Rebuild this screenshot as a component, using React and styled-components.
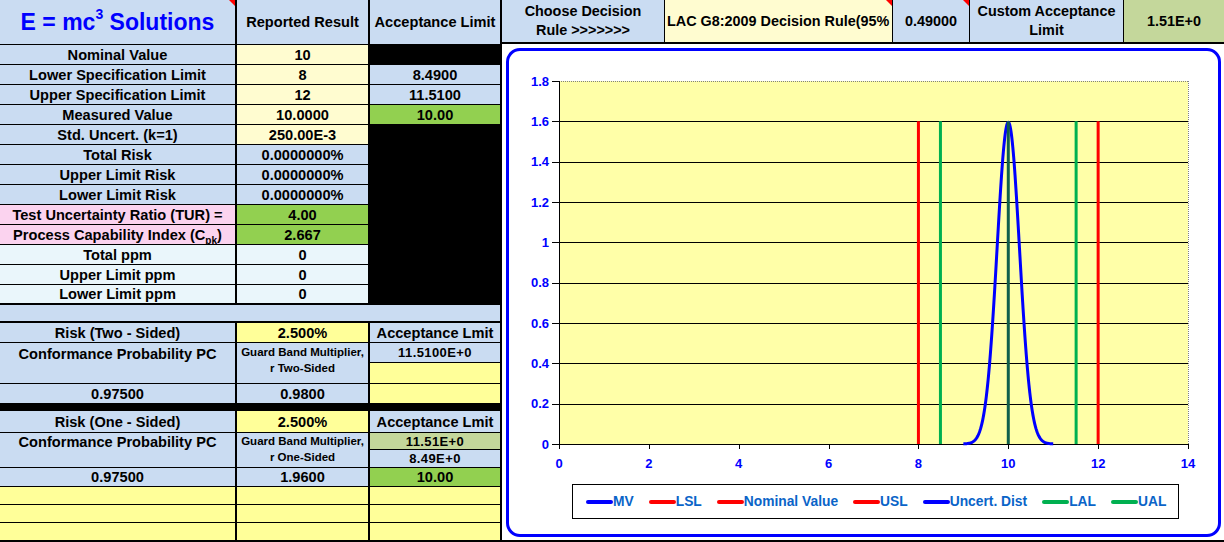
import React from 'react';
import styled, { createGlobalStyle } from 'styled-components';

const GlobalStyle = createGlobalStyle`
  html, body { margin: 0; padding: 0; background: #fff; }
  body { font-family: "Liberation Sans", Arial, sans-serif; overflow: hidden; }
`;

const fills = {
  blue: '#cadcf2',
  cream: '#fffcd0',
  yellow: '#ffff99',
  green: '#92d050',
  sage: '#c4d79b',
  pink: '#fbd3ef',
  mist: '#eaf6fb',
  black: '#000000',
};

const Page = styled.div`
  display: flex;
  width: 1224px;
  height: 542px;
  overflow: hidden;
`;

const Sheet = styled.div`
  flex: none;
  display: grid;
  grid-template-columns: 237px 133px 132px;
  grid-template-rows: 45px repeat(13, 20px) 18px 20px 20px 21px 20px 7px 22px 17px 18px 19px 18px 18px 19px;
`;

const Cell = styled.div`
  position: relative;
  box-sizing: border-box;
  grid-column: ${p => (p.$span ? `span ${p.$span}` : 'auto')};
  grid-row: ${p => (p.$rows ? `span ${p.$rows}` : 'auto')};
  background: ${p => fills[p.$fill || 'blue']};
  border-right: 2px solid #000;
  border-bottom: ${p => (p.$bb ?? 1)}px solid #000;
  display: flex;
  flex-direction: column;
  align-items: center;
  justify-content: ${p => (p.$top ? 'flex-start' : 'center')};
  padding-top: ${p => p.$pt || 0}px;
  text-align: center;
  white-space: nowrap;
  overflow: hidden;
  font-weight: bold;
  font-size: ${p => p.$size || 14.6}px;
  letter-spacing: ${p => p.$ls || 0}px;
  line-height: ${p => p.$lh || 'normal'};
  color: #000;

  ${p => p.$note && `
    &::after {
      content: '';
      position: absolute;
      top: 0;
      right: 0;
      border-top: 6px solid #ff0000;
      border-left: 6px solid transparent;
    }
  `}
`;

const Title = styled.span`
  color: #0000ff;
  font-size: 23px;
`;

const Sup = styled.sup`
  font-size: 14px;
  line-height: 0;
  position: relative;
  top: -2px;
`;

const Sub = styled.sub`
  font-size: 10px;
  line-height: 0;
`;

const Side = styled.div`
  flex: none;
  width: 722px;
  display: flex;
  flex-direction: column;
`;

const TopBar = styled.div`
  box-sizing: border-box;
  height: 44px;
  display: grid;
  grid-template-columns: 163px 228px 77px 154px 100px;
  border-bottom: 2px solid #000;
`;

const TopCell = styled.div`
  position: relative;
  box-sizing: border-box;
  background: ${p => fills[p.$fill || 'blue']};
  border-right: ${p => (p.$last ? 0 : 1)}px solid #000;
  display: flex;
  flex-direction: column;
  align-items: ${p => (p.$left ? 'flex-start' : 'center')};
  justify-content: center;
  padding-left: ${p => (p.$left ? 2 : 0)}px;
  font-weight: bold;
  font-size: 14.4px;
  line-height: 19px;
  text-align: center;
  white-space: nowrap;
  overflow: hidden;

  ${p => p.$note && `
    &::after {
      content: '';
      position: absolute;
      top: 0;
      right: 0;
      border-top: 6px solid #ff0000;
      border-left: 6px solid transparent;
    }
  `}
`;

const ChartArea = styled.div`
  flex: 1;
  box-sizing: border-box;
  display: flex;
  padding: 4px 3px 3px 4px;
  border-bottom: 2px solid #000;
  background: #fff;
`;

const Panel = styled.div`
  flex: 1;
  display: flex;
  flex-direction: column;
  border: 3px solid #0000ff;
  border-radius: 14px;
  background: #fff;
`;

const PlotSvg = styled.svg`
  display: block;
  width: 709px;
  height: 433px;
  font-family: "Liberation Sans", Arial, sans-serif;
`;

const LegendBox = styled.div`
  box-sizing: border-box;
  margin-left: 63px;
  width: 607px;
  height: 35px;
  border: 1px solid #000;
  display: flex;
  align-items: center;
  gap: 15px;
  padding-left: 13px;
`;

const LegendItem = styled.div`
  display: flex;
  align-items: center;
  font-weight: bold;
  font-size: 13.8px;
  color: #0a64c8;
`;

const Swatch = styled.span`
  width: 27px;
  height: 4px;
  border-radius: 2px;
  background: ${p => p.$color};
`;

// plot geometry (svg coords, origin at panel inner top-left)
const X0 = 50, X1 = 679, Y0 = 30, Y1 = 393;
const sx = x => X0 + (x * (X1 - X0)) / 14;
const sy = y => Y1 - (y * (Y1 - Y0)) / 1.8;

const curve = (() => {
  const pts = [];
  for (let i = 0; i <= 200; i++) {
    const x = 9 + i * 0.01;
    const y = 1.5958 * Math.exp(-((x - 10) ** 2) / (2 * 0.0625));
    pts.push(`${sx(x).toFixed(2)},${sy(y).toFixed(2)}`);
  }
  return pts.join(' ');
})();

const yTicks = [0, 0.2, 0.4, 0.6, 0.8, 1, 1.2, 1.4, 1.6, 1.8];
const xTicks = [0, 2, 4, 6, 8, 10, 12, 14];

const limits = [
  { x: 8, color: '#ff0000' },
  { x: 8.49, color: '#00b050' },
  { x: 11.51, color: '#00b050' },
  { x: 12, color: '#ff0000' },
];

const legend = [
  ['MV', '#0000ff'],
  ['LSL', '#ff0000'],
  ['Nominal Value', '#ff0000'],
  ['USL', '#ff0000'],
  ['Uncert. Dist', '#0000ff'],
  ['LAL', '#00b050'],
  ['UAL', '#00b050'],
];

const Chart = () => (
  <Panel>
    <PlotSvg viewBox="0 0 709 433">
      <rect x={X0} y={Y0} width={X1 - X0} height={Y1 - Y0} fill="#ffffa8" />
      <line x1={X0} y1={Y0 + 0.5} x2={X1} y2={Y0 + 0.5} stroke="#808080" strokeDasharray="1 1" />
      <line x1={X1 + 0.5} y1={Y0} x2={X1 + 0.5} y2={Y1} stroke="#808080" strokeDasharray="1 1" />
      {yTicks.slice(1, -1).map(v => (
        <line key={v} x1={X0} x2={X1} y1={Math.round(sy(v)) + 0.5} y2={Math.round(sy(v)) + 0.5} stroke="#000" />
      ))}
      {yTicks.map(v => (
        <g key={v}>
          <line x1={X0 - 7} x2={X0} y1={Math.round(sy(v)) + 0.5} y2={Math.round(sy(v)) + 0.5} stroke="#000" />
          <text x={X0 - 10} y={sy(v) + 4.5} textAnchor="end" fontSize="13" fontWeight="bold" fill="#0000ff">
            {v}
          </text>
        </g>
      ))}
      {xTicks.map(v => (
        <g key={v}>
          <line x1={Math.round(sx(v)) + 0.5} x2={Math.round(sx(v)) + 0.5} y1={Y1} y2={Y1 + 5} stroke="#000" />
          <text x={sx(v)} y={Y1 + 24} textAnchor="middle" fontSize="13" fontWeight="bold" fill="#0000ff">
            {v}
          </text>
        </g>
      ))}
      <line x1={X0 + 0.5} y1={Y0} x2={X0 + 0.5} y2={Y1} stroke="#000" />
      <line x1={X0} y1={Y1 + 0.5} x2={X1} y2={Y1 + 0.5} stroke="#000" />
      {limits.map(l => (
        <line key={l.x} x1={sx(l.x)} x2={sx(l.x)} y1={sy(1.6)} y2={Y1} stroke={l.color} strokeWidth="3" />
      ))}
      <polyline points={curve} fill="none" stroke="#0000ff" strokeWidth="3" strokeLinejoin="round" />
      <line x1={sx(10)} x2={sx(10)} y1={sy(1.6)} y2={Y1} stroke="#10604c" strokeWidth="3" />
    </PlotSvg>
    <LegendBox>
      {legend.map(([label, color]) => (
        <LegendItem key={label}>
          <Swatch $color={color} />
          {label}
        </LegendItem>
      ))}
    </LegendBox>
  </Panel>
);

const App = () => (
  <Page>
    <GlobalStyle />
    <Sheet>
      <Cell $note>
        <Title>
          E = mc<Sup>3</Sup> Solutions
        </Title>
      </Cell>
      <Cell>Reported Result</Cell>
      <Cell>Acceptance Limit</Cell>

      <Cell>Nominal Value</Cell>
      <Cell $fill="cream">10</Cell>
      <Cell $fill="black" />

      <Cell>Lower Specification Limit</Cell>
      <Cell $fill="cream">8</Cell>
      <Cell>8.4900</Cell>

      <Cell>Upper Specification Limit</Cell>
      <Cell $fill="cream">12</Cell>
      <Cell>11.5100</Cell>

      <Cell>Measured Value</Cell>
      <Cell $fill="cream">10.0000</Cell>
      <Cell $fill="green">10.00</Cell>

      <Cell>Std. Uncert. (k=1)</Cell>
      <Cell $fill="cream">250.00E-3</Cell>
      <Cell $fill="black" $rows={9} $bb={2} />

      <Cell>Total Risk</Cell>
      <Cell>0.0000000%</Cell>
      <Cell>Upper Limit Risk</Cell>
      <Cell>0.0000000%</Cell>
      <Cell>Lower Limit Risk</Cell>
      <Cell>0.0000000%</Cell>

      <Cell $fill="pink">Test Uncertainty Ratio (TUR) =</Cell>
      <Cell $fill="green">4.00</Cell>
      <Cell $fill="pink">
        <span>
          Process Capability Index (C<Sub>pk</Sub>)
        </span>
      </Cell>
      <Cell $fill="green">2.667</Cell>

      <Cell $fill="mist">Total ppm</Cell>
      <Cell $fill="mist">0</Cell>
      <Cell $fill="mist">Upper Limit ppm</Cell>
      <Cell $fill="mist">0</Cell>
      <Cell $fill="mist" $bb={2}>Lower Limit ppm</Cell>
      <Cell $fill="mist" $bb={2}>0</Cell>

      <Cell $span={3} $bb={2} />

      <Cell>Risk (Two - Sided)</Cell>
      <Cell $fill="yellow">2.500%</Cell>
      <Cell>Acceptance Lmit</Cell>

      <Cell $rows={2} $top $pt={3}>Conformance Probability PC</Cell>
      <Cell $rows={2} $top $pt={1} $size={11.5} $lh="16px">
        <span>Guard Band Multiplier,</span>
        <span>r Two-Sided</span>
      </Cell>
      <Cell $size={13} $ls={0.4}>11.5100E+0</Cell>
      <Cell $fill="yellow" />

      <Cell>0.97500</Cell>
      <Cell>0.9800</Cell>
      <Cell $fill="yellow" />

      <Cell $fill="black" $span={3} $bb={0} />

      <Cell>Risk (One - Sided)</Cell>
      <Cell $fill="yellow">2.500%</Cell>
      <Cell>Acceptance Lmit</Cell>

      <Cell $rows={2} $top $pt={1}>Conformance Probability PC</Cell>
      <Cell $rows={2} $top $pt={0} $size={11.5} $lh="16px">
        <span>Guard Band Multiplier,</span>
        <span>r One-Sided</span>
      </Cell>
      <Cell $fill="sage" $size={13} $ls={0.4}>11.51E+0</Cell>
      <Cell $size={13} $ls={0.4}>8.49E+0</Cell>

      <Cell>0.97500</Cell>
      <Cell>1.9600</Cell>
      <Cell $fill="green">10.00</Cell>

      <Cell $fill="yellow" />
      <Cell $fill="yellow" />
      <Cell $fill="yellow" />
      <Cell $fill="yellow" />
      <Cell $fill="yellow" />
      <Cell $fill="yellow" />
      <Cell $fill="yellow" $bb={2} />
      <Cell $fill="yellow" $bb={2} />
      <Cell $fill="yellow" $bb={2} />
    </Sheet>

    <Side>
      <TopBar>
        <TopCell>
          <span>Choose Decision</span>
          <span>Rule &gt;&gt;&gt;&gt;&gt;&gt;&gt;</span>
        </TopCell>
        <TopCell $fill="cream" $left $note>LAC G8:2009 Decision Rule(95%</TopCell>
        <TopCell $note>0.49000</TopCell>
        <TopCell>
          <span>Custom Acceptance</span>
          <span>Limit</span>
        </TopCell>
        <TopCell $fill="sage" $last>1.51E+0</TopCell>
      </TopBar>
      <ChartArea>
        <Chart />
      </ChartArea>
    </Side>
  </Page>
);

export default App;
